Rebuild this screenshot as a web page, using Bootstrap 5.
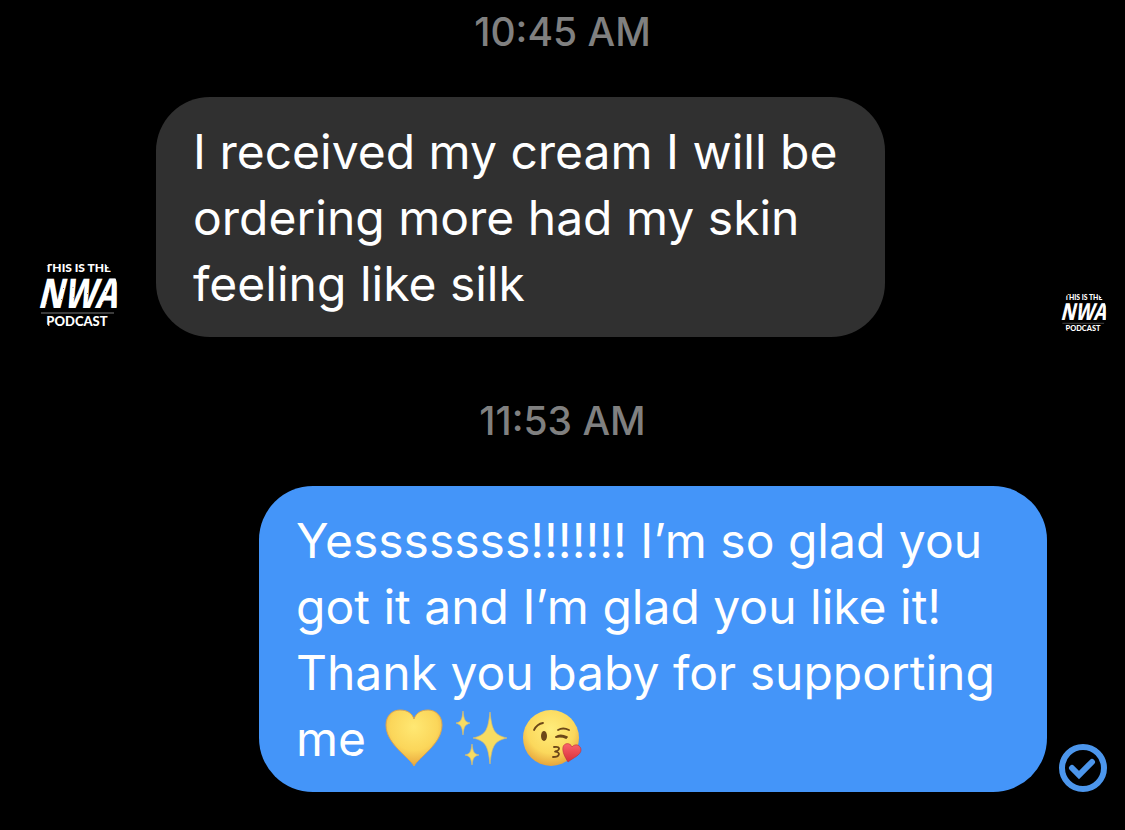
<!DOCTYPE html>
<html lang="en">
<head>
<meta charset="utf-8">
<meta name="viewport" content="width=device-width, initial-scale=1">
<title>Conversation</title>
<link href="https://cdn.jsdelivr.net/npm/bootstrap@5.3.0/dist/css/bootstrap.min.css" rel="stylesheet">
<style>
  body { background: #000; color: #fff; font-family: Inter, "Liberation Sans", sans-serif; }
  .chat { padding: 8px 0 38px; }
  .message { padding: 0 18px 0 35px; }
  .stamp { color: #808080; font-size: 39px; font-weight: 500; line-height: 48px; margin-bottom: 41px; }
  .bubble { font-size: 48px; line-height: 66px; padding: 22px 37px 20px; border-radius: 54px; }
  .received { background: #303030; max-width: 729px; margin-left: 37px; }
  .incoming { margin-bottom: 60px; }
  .sent { background: #4495f9; max-width: 788px; }
  .avatar-lg { width: 84px; height: 84px; }
  .avatar-sm { width: 48px; height: 48px; }
  .emoji { width: 60px; height: 60px; vertical-align: -12px; margin-right: 9px; }
  .logo-line { font-family: Lato, sans-serif; font-weight: 900; }
  .logo-main { font-family: "Open Sans Condensed", "DejaVu Sans Condensed", sans-serif; font-weight: 700; font-style: italic; }
</style>
</head>
<body>
<svg width="0" height="0" class="position-absolute" aria-hidden="true">
  <defs>
    <clipPath id="disc"><circle cx="42" cy="42" r="42"/></clipPath>
    <symbol id="logo" viewBox="0 0 84 84">
      <g clip-path="url(#disc)" fill="#fff" text-anchor="middle">
        <text class="logo-line" x="43" y="19" font-size="12">THIS IS THE</text>
        <text class="logo-main" x="42" y="55" font-size="41">NWA</text>
        <path d="M6 60H79" stroke="#777" stroke-width="1"/>
        <text class="logo-line" x="42" y="73" font-size="13">PODCAST</text>
        <path d="M13 40l1 1M11 50l1 1M28 35l1 1M26 46l1 1M38 34v1M39 44v1M52 40l1 1M67 49l1 1M70 38l1 1" stroke="#777" stroke-width="1" fill="none"/>
      </g>
    </symbol>
  </defs>
</svg>

<main class="chat container-fluid">
  <p class="stamp text-center"><time datetime="10:45">10:45 AM</time></p>

  <div class="message incoming d-flex align-items-end">
    <svg class="avatar-lg flex-shrink-0" role="img" aria-label="This is the NWA Podcast"><use href="#logo"/></svg>
    <div class="bubble received">I received my cream I will be ordering more had my skin feeling like silk</div>
    <svg class="avatar-sm flex-shrink-0 ms-auto" role="img" aria-label="Seen"><use href="#logo"/></svg>
  </div>

  <p class="stamp text-center"><time datetime="11:53">11:53 AM</time></p>

  <div class="message d-flex align-items-end justify-content-end gap-2">
    <div class="bubble sent">Yesssssss!!!!!!! I’m so glad you got it and I’m glad you like it! Thank you baby for supporting me
      <span class="text-nowrap ms-1"><svg class="emoji" viewBox="0 0 60 60" role="img" aria-label="Yellow heart">
        <defs><radialGradient id="gold" cx=".5" cy=".3" r=".7"><stop offset="0" stop-color="#ffe873"/><stop offset=".6" stop-color="#fbd65a"/><stop offset="1" stop-color="#e9a63d"/></radialGradient></defs>
        <path d="M30 58C25 49 2 36 2 17C2 8 8 2 16 2C23 2 28 5 30 11C32 5 37 2 44 2C52 2 58 8 58 17C58 36 35 49 30 58Z" fill="url(#gold)" stroke="#d9a552" stroke-width="1"/>
      </svg><svg class="emoji" viewBox="0 0 60 60" role="img" aria-label="Sparkles">
        <g fill="#f7dc62" stroke="#d8bd70" stroke-width=".7"><path d="M37 4C39 22 41 27 54 30C41 33 39 38 37 56C35 38 33 33 20 30C33 27 35 22 37 4Z"/><path d="M10 3C11 12 12 14 17 15C12 17 11 18 10 27C9 18 8 17 3 15C8 14 9 12 10 3Z"/><path d="M19 36C20 44 21 46 26 47C21 48 20 50 19 57C18 50 17 48 12 47C17 46 18 44 19 36Z"/></g>
      </svg><svg class="emoji me-0" viewBox="0 0 60 60" role="img" aria-label="Face blowing a kiss">
        <defs><radialGradient id="face" cx=".5" cy=".35" r=".65"><stop offset="0" stop-color="#ffed7c"/><stop offset=".65" stop-color="#fbd85c"/><stop offset="1" stop-color="#e6a43b"/></radialGradient><linearGradient id="red" x2="0" y2="1"><stop stop-color="#fa626b"/><stop offset="1" stop-color="#d82f38"/></linearGradient></defs>
        <circle cx="29" cy="30" r="28" fill="url(#face)"/>
        <ellipse cx="22" cy="28" rx="3" ry="5" fill="#6c4718"/>
        <g fill="none" stroke="#6c4718" stroke-width="1.8" stroke-linecap="round" stroke-linejoin="round"><path d="M12 22Q15 16 21 15M36 22Q41 19 47 22M34 29Q38 26 45 29M34 29Q40 28 44 30"/><path d="M32 39C38 38 39 42 33 43.500C39 44 38 49 31 49"/></g>
        <path d="M46 54C43 49 40 44 41 39C42 35 48 34 50 39C53 35 59 37 59 42C59 47 51 50 46 54Z" fill="url(#red)" stroke="#b9343b" stroke-width=".6"/>
      </svg></span>
    </div>
    <svg class="avatar-sm flex-shrink-0 ms-1" viewBox="0 0 48 48" role="img" aria-label="Delivered">
      <circle cx="24" cy="24" r="21" fill="none" stroke="#4c96ec" stroke-width="6"/>
      <path d="M13 24L20 31L33 18" fill="none" stroke="#4c96ec" stroke-width="6" stroke-linecap="round" stroke-linejoin="miter"/>
    </svg>
  </div>
</main>
<script src="https://cdn.jsdelivr.net/npm/bootstrap@5.3.0/dist/js/bootstrap.bundle.min.js"></script>
</body>
</html>
